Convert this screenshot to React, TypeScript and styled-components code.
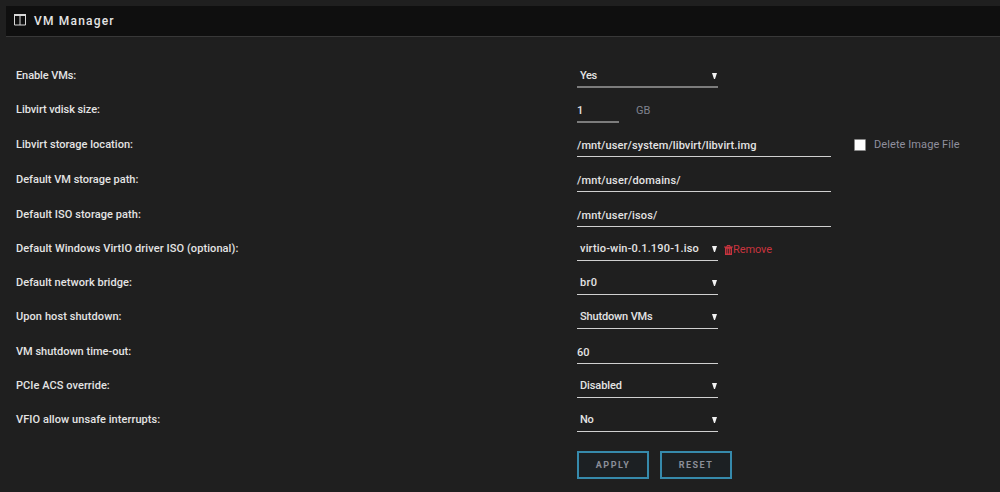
import React from 'react';
import styled, { createGlobalStyle } from 'styled-components';

const Global = createGlobalStyle`
  * { box-sizing: border-box; }
  html, body { margin: 0; background: #1f1f1f; overflow: hidden; }
  body { font: 500 11px/26px Roboto, "Noto Sans", sans-serif; color: #e4e4e4; }
`;

const Page = styled.main`
  height: 492px;
  padding: 6px 0 0 6px;
  background: #1f1f1f;
`;

const TitleBar = styled.header`
  display: flex;
  align-items: center;
  gap: 8px;
  height: 31px;
  padding: 0 0 2px 8px;
  background: #0f0f0f;
  border-bottom: 1px solid #383838;
`;

const Title = styled.h1`
  margin: 0;
  font-size: 12px;
  font-weight: 500;
  line-height: 28px;
  padding-top: 1px;
  letter-spacing: 1.2px;
  white-space: nowrap;
`;

const Form = styled.form`
  padding: 15px 0 0 10px;
`;

const Row = styled.div<{ $height: number }>`
  display: flex;
  align-items: flex-end;
  height: ${(p) => p.$height}px;
  white-space: nowrap;
`;

const Label = styled.label<{ $track: number }>`
  width: 561px;
  height: 25px;
  letter-spacing: ${(p) => p.$track}px;
`;

const Field = styled.div<{ $width: number; $soft?: boolean; $drop: number }>`
  display: flex;
  justify-content: space-between;
  width: ${(p) => p.$width}px;
  height: ${(p) => 25 + p.$drop}px;
  margin-bottom: ${(p) => -p.$drop}px;
  border-bottom: ${(p) => (p.$soft ? '2px solid #7c7c7c' : '1px solid #d0d0d0')};
`;

const Value = styled.span<{ $track: number; $select?: boolean }>`
  padding: ${(p) => (p.$select ? '0 0 0 3px' : '1px 0 0 0')};
  letter-spacing: ${(p) => p.$track}px;
`;

const Arrow = styled.svg`
  width: 5px;
  height: 6px;
  margin: 10px 1px 0 0;
  fill: #f2f2f2;
`;

const Unit = styled.span`
  height: 24px;
  margin-left: 17px;
  color: #80838f;
  font-weight: 400;
`;

const CheckLabel = styled.label`
  display: flex;
  align-items: center;
  gap: 8px;
  height: 24px;
  margin-left: 23px;
  color: #8f8f9e;
  font-weight: 400;
  letter-spacing: 0.08px;
`;

const Box = styled.span`
  width: 12px;
  height: 12px;
  border: 1px solid #8a8a8a;
  border-radius: 1px;
  background: #fff;
`;

const Remove = styled.a`
  display: flex;
  align-items: center;
  height: 24px;
  margin: 0 0 -1px 6px;
  color: #c8343e;
  font-weight: 400;
  letter-spacing: -0.1px;
`;

const Actions = styled.div`
  display: flex;
  gap: 11px;
  padding: 19px 0 0 561px;
`;

const Button = styled.button`
  width: 72px;
  height: 28px;
  padding: 0;
  border: 2px solid #368aac;
  background: #1c2023;
  color: #8b8e98;
  font: 700 9px/22px Roboto, "Noto Sans", sans-serif;
  letter-spacing: 1.5px;
`;

type Item = {
  label: string;
  track: number;
  value: string;
  valueTrack: number;
  width: number;
  height: number;
  select?: boolean;
  soft?: boolean;
  drop?: number;
  extra?: React.ReactNode;
};

const TrashIcon = () => (
  <svg width="9" height="10" viewBox="0 0 9 10" fill="#c8343e">
    <path fillRule="evenodd" d="M0 1.4h2.4L3 0h3l.6 1.4H9v1.2H8V10H1V2.6H0zM3.3 1.4h2.4L5.4.9H3.6zM2.5 3.8v4.8h.7V3.8zM4.2 3.8v4.8h.7V3.8zM5.9 3.8v4.8h.7V3.8z" />
  </svg>
);

const items: Item[] = [
  { label: 'Enable VMs:', track: -0.09, value: 'Yes', valueTrack: -0.4, width: 141, height: 36, select: true, soft: true },
  { label: 'Libvirt vdisk size:', track: -0.05, value: '1', valueTrack: 0, width: 42, height: 34, soft: true, drop: 1, extra: <Unit>GB</Unit> },
  {
    label: 'Libvirt storage location:', track: 0.04, value: '/mnt/user/system/libvirt/libvirt.img', valueTrack: 0.11, width: 254, height: 35,
    extra: <CheckLabel><Box />Delete Image File</CheckLabel>,
  },
  { label: 'Default VM storage path:', track: 0, value: '/mnt/user/domains/', valueTrack: 0.17, width: 254, height: 35 },
  { label: 'Default ISO storage path:', track: 0.08, value: '/mnt/user/isos/', valueTrack: 0.13, width: 254, height: 35 },
  {
    label: 'Default Windows VirtIO driver ISO (optional):', track: 0.09, value: 'virtio-win-0.1.190-1.iso', valueTrack: 0.17, width: 141, height: 34, select: true,
    extra: <Remove><TrashIcon />Remove</Remove>,
  },
  { label: 'Default network bridge:', track: 0.05, value: 'br0', valueTrack: 0.3, width: 141, height: 34, select: true },
  { label: 'Upon host shutdown:', track: 0.08, value: 'Shutdown VMs', valueTrack: -0.15, width: 141, height: 34, select: true },
  { label: 'VM shutdown time-out:', track: 0, value: '60', valueTrack: 0, width: 141, height: 35 },
  { label: 'PCIe ACS override:', track: 0.06, value: 'Disabled', valueTrack: -0.1, width: 141, height: 34, select: true },
  { label: 'VFIO allow unsafe interrupts:', track: 0.07, value: 'No', valueTrack: -0.3, width: 141, height: 34, select: true },
];

export default function App() {
  return (
    <Page>
      <Global />
      <TitleBar>
        <svg width="12" height="12" viewBox="0 0 12 12" fill="none" stroke="#d8d8d8">
          <path d="M.5 1v10h11V1M6 1v10" />
          <path d="M0 1h12" strokeWidth="2" />
        </svg>
        <Title>VM Manager</Title>
      </TitleBar>
      <Form>
        {items.map((it) => (
          <Row key={it.label} $height={it.height}>
            <Label $track={it.track}>{it.label}</Label>
            <Field $width={it.width} $soft={it.soft} $drop={it.drop ?? 0}>
              <Value $track={it.valueTrack} $select={it.select}>{it.value}</Value>
              {it.select && <Arrow viewBox="0 0 5 6"><path d="M0 0h5L3 6H2z" /></Arrow>}
            </Field>
            {it.extra}
          </Row>
        ))}
        <Actions>
          <Button type="button">APPLY</Button>
          <Button type="button">RESET</Button>
        </Actions>
      </Form>
    </Page>
  );
}
